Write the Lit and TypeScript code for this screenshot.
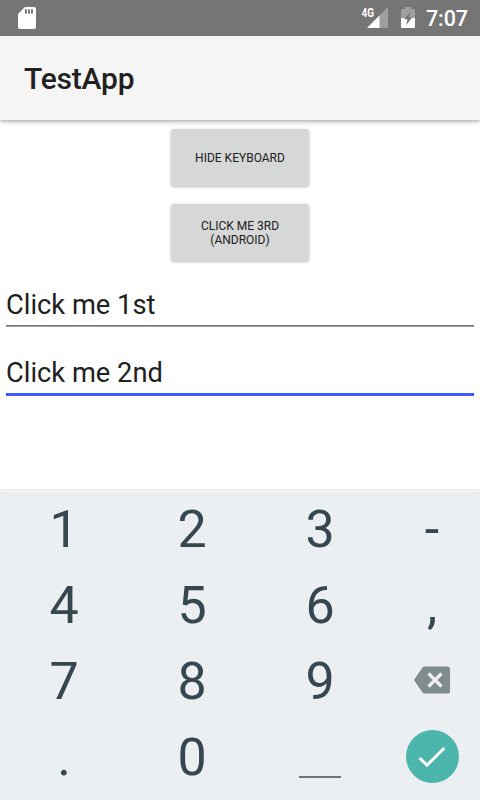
import { LitElement, html, css, svg } from "lit";
import { customElement } from "lit/decorators.js";

const backspace = html`<svg class="backspace" width="36" height="28" viewBox="0 0 36 28">
  <path fill="#808b8f" d="M10.6 0.4H33.3Q36 0.4 36 3V25Q36 27.6 33.3 27.6H10.6Q9.3 27.6 8.5 26.4L0.6 15Q0 14 0.6 13L8.5 1.6Q9.3 0.4 10.6 0.4Z" />
  <path fill="none" stroke="#eceff1" stroke-width="3.3" d="M14.5 7.5L27.5 20.5M27.5 7.5L14.5 20.5" />
</svg>`;
const check = html`<span class="enter"><svg width="28" height="22" viewBox="0 0 28 22">
  <path fill="none" stroke="#fff" stroke-width="3" d="M1.7 12L9 19.2L26.2 2" />
</svg></span>`;

@customElement("app-root")
export class AppRoot extends LitElement {
  static styles = css`
    :host { display: flex; flex-direction: column; height: 800px; width: 480px; background: #fff; font-family: Roboto, sans-serif; color: #212121; overflow: hidden; }
    .status { height: 36px; flex: none; box-sizing: border-box; background: #757575; color: #fff; display: flex; align-items: center; padding: 0 12px 0 18px; position: relative; z-index: 1; }
    .status svg { display: block; flex: none; }
    .spacer { flex: 1; }
    .time { font-size: 21.5px; font-weight: 500; line-height: 36px; margin: 2px 0 0 11px; width: 42px; white-space: nowrap; letter-spacing: -.1px; }
    .bar { height: 84px; flex: none; background: #f5f5f5; box-shadow: 0 1px 5px rgba(0,0,0,.42); padding-left: 24px; font-size: 30px; line-height: 86px; font-weight: 500; letter-spacing: -.2px; }
    .content { flex: 1; display: flex; flex-direction: column; align-items: center; padding: 9px 6px 0; }
    .button { width: 138px; height: 57px; border: 0; padding: 0 20px; border-radius: 3px; background: #d6d7d7; box-shadow: 0 1px 3px rgba(0,0,0,.28); font: 400 12px/14px Roboto, sans-serif; color: #212121; margin-bottom: 18px; }
    .field { width: 468px; height: 68px; box-sizing: border-box; font-size: 27.3px; line-height: 34px; }
    .field .line { height: 2px; margin-top: 3px; background: linear-gradient(#757575 50%, #a0a0a0 50%); }
    .field .line.active { height: 3px; background: #3d5afe; }
    .first { margin-top: 9px; }
    .keyboard { height: 309px; flex: none; background: #eceff1; box-shadow: 0 -1px 3px rgba(0,0,0,.12); border-top: 1px solid #f5f7f8; box-sizing: border-box; }
    .keys { display: grid; grid-template-columns: 128px 128px 128px 96px; grid-auto-rows: 76px; }
    .key { display: flex; align-items: center; justify-content: center; font-size: 52px; line-height: 76px; color: #37474f; }
    .space { width: 42px; height: 2px; background: #6b777c; margin-top: 38px; }
    .backspace { margin-bottom: 4px; }
    .enter { width: 53px; height: 53px; border-radius: 50%; background: #4db6ac; display: flex; align-items: center; justify-content: center; margin-bottom: 3px; }
  `;

  render() {
    const keys = ["1", "2", "3", "-", "4", "5", "6", ",", "7", "8", "9", backspace, ".", "0", html`<span class="space"></span>`, check];
    return html`
      <div class="status">
        <svg width="18" height="22" viewBox="0 0 18 22">
          <path fill="#fff" d="M7 0H16Q18 0 18 2V20Q18 22 16 22H2Q0 22 0 20V8Q0 7 .7 6.3Z" />
          ${[7, 10, 13].map((x) => svg`<rect x=${x} y="2.3" width="1.9" height="4.4" fill="#757575" />`)}
        </svg>
        <span class="spacer"></span>
        <svg width="27" height="24" viewBox="0 0 27 24">
          <path fill="#9f9f9f" d="M26 1V22H5Z" />
          <path fill="#fff" d="M17.5 9.5V22H5Z" />
          <text x="-0.5" y="11" fill="#fff" font-size="12.5" font-weight="700" textLength="12.5" lengthAdjust="spacingAndGlyphs">4G</text>
        </svg>
        <svg width="26" height="24" viewBox="0 0 26 24">
          <path fill="#9f9f9f" d="M16 1H22V3H25Q26 3 26 4V12H12V4Q12 3 13 3H16Z" />
          <path fill="#fff" d="M12 12H26V21Q26 22 25 22H13Q12 22 12 21Z" />
          <path fill="#757575" d="M21.5 6L15 13.3H18.5L17 19.3L23.2 11.5H19.7Z" />
        </svg>
        <span class="time">7:07</span>
      </div>
      <div class="bar">TestApp</div>
      <div class="content">
        <button class="button">HIDE KEYBOARD</button>
        <button class="button">CLICK ME 3RD (ANDROID)</button>
        <div class="field first">Click me 1st<div class="line"></div></div>
        <div class="field">Click me 2nd<div class="line active"></div></div>
      </div>
      <div class="keyboard"><div class="keys">${keys.map((k) => html`<div class="key">${k}</div>`)}</div></div>
    `;
  }
}
